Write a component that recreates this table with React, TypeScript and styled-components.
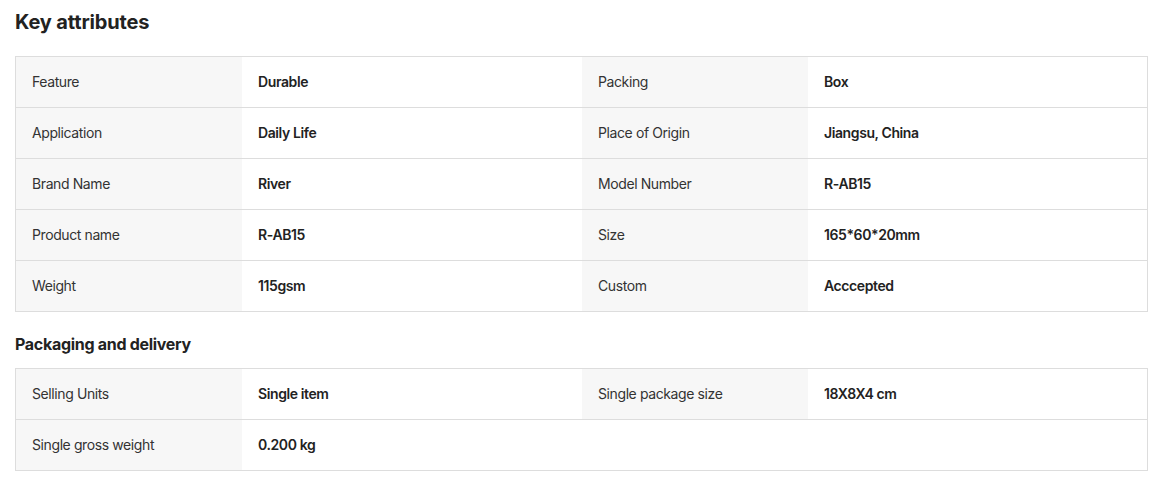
import React from "react";
import styled, { createGlobalStyle } from "styled-components";

const Global = createGlobalStyle`
  html, body { margin: 0; padding: 0; background: #fff; }
  body { font-family: Inter, "Noto Sans", sans-serif; color: #222; }
`;

const Page = styled.div`
  padding: 8px 0 0 15px;
  width: 1133px;
`;

const Title = styled.h2`
  margin: 0;
  font-size: 20px;
  line-height: 28px;
  font-weight: 700;
  letter-spacing: -0.15px;
  color: #222;
`;

const SubTitle = styled.h3`
  margin: 0;
  font-size: 16px;
  line-height: 22px;
  font-weight: 700;
  letter-spacing: -0.3px;
  color: #222;
`;

const Table = styled.div<{ $mt: number; $mb: number }>`
  margin-top: ${(p) => p.$mt}px;
  margin-bottom: ${(p) => p.$mb}px;
  border: 1px solid #ddd;
  display: flex;
  flex-direction: column;
`;

const Row = styled.div`
  display: grid;
  grid-template-columns: 226px 340px 226px 339px;
  height: 50px;
  & + & { border-top: 1px solid #ddd; }
`;

const Cell = styled.div<{ $label?: boolean; $empty?: boolean }>`
  display: flex;
  align-items: center;
  padding: 0 16px 1px;
  font-size: 14px;
  letter-spacing: -0.4px;
  background: ${(p) => (p.$label && !p.$empty ? "#f7f7f7" : "#fff")};
  color: ${(p) => (p.$label ? "#333" : "#222")};
  font-weight: ${(p) => (p.$label ? 400 : 600)};
`;

type Pair = [string, string];

const key: Pair[][] = [
  [["Feature", "Durable"], ["Packing", "Box"]],
  [["Application", "Daily Life"], ["Place of Origin", "Jiangsu, China"]],
  [["Brand Name", "River"], ["Model Number", "R-AB15"]],
  [["Product name", "R-AB15"], ["Size", "165*60*20mm"]],
  [["Weight", "115gsm"], ["Custom", "Acccepted"]],
];

const pack: Pair[][] = [
  [["Selling Units", "Single item"], ["Single package size", "18X8X4 cm"]],
  [["Single gross weight", "0.200 kg"], ["", ""]],
];

const Rows = ({ data }: { data: Pair[][] }) => (
  <>
    {data.map((row, i) => (
      <Row key={i}>
        {row.map(([l, v], j) => (
          <React.Fragment key={j}>
            <Cell $label $empty={!l}>{l}</Cell>
            <Cell>{v}</Cell>
          </React.Fragment>
        ))}
      </Row>
    ))}
  </>
);

export default function App() {
  return (
    <>
      <Global />
      <Page>
        <Title>Key attributes</Title>
        <Table $mt={20} $mb={21}>
          <Rows data={key} />
        </Table>
        <SubTitle>Packaging and delivery</SubTitle>
        <Table $mt={13} $mb={0}>
          <Rows data={pack} />
        </Table>
      </Page>
    </>
  );
}
